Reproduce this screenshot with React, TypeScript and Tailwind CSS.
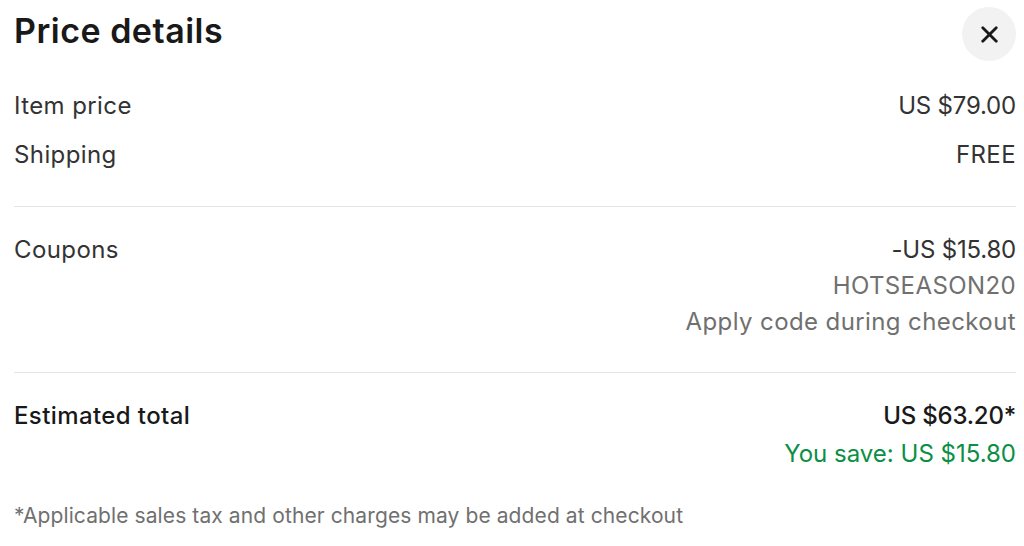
import { X } from "lucide-react";

function Row({ label, children, bold }: { label: string; children: React.ReactNode; bold?: boolean }) {
  return (
    <div className="flex items-start justify-between">
      <span className={bold ? "font-medium text-[#191919]" : "text-[#333333]"}>{label}</span>
      <div className="flex flex-col items-end">{children}</div>
    </div>
  );
}

export default function App() {
  return (
    <div className="w-[1024px] h-[546px] bg-white pl-[14px] pr-[8px] text-[24px] leading-[36px] tracking-[0.4px] font-['Inter',sans-serif] text-[#333333]">
      <div className="flex items-center justify-between pt-[7px]">
        <h2 className="text-[34px] leading-[48px] font-semibold text-[#191919] tracking-[0.5px] -mt-[6px]">Price details</h2>
        <button className="w-[54px] h-[54px] rounded-full bg-[#f2f2f2] flex items-center justify-center">
          <X className="w-[27px] h-[27px] text-[#191919]" strokeWidth={2.5} />
        </button>
      </div>

      <div className="mt-[27px] flex flex-col gap-[13px] pb-[33px] border-b border-[#e5e5e5]">
        <Row label="Item price">
          <span className="tracking-[-0.2px]">US $79.00</span>
        </Row>
        <Row label="Shipping">
          <span>FREE</span>
        </Row>
      </div>

      <div className="pt-[25px] pb-[32px] border-b border-[#e5e5e5]">
        <Row label="Coupons">
          <span className="tracking-[-0.2px]">-US $15.80</span>
          <span className="text-[#707070]">HOTSEASON20</span>
          <span className="text-[#707070]">Apply code during checkout</span>
        </Row>
      </div>

      <div className="pt-[25px]">
        <Row label="Estimated total" bold>
          <span className="font-medium text-[#191919] tracking-[-0.2px]">US $63.20*</span>
          <span className="text-[#0a8f45] mt-[2px] tracking-normal">You save: US $15.80</span>
        </Row>
      </div>

      <p className="mt-[26px] text-[21px] tracking-[0.1px] text-[#707070]">*Applicable sales tax and other charges may be added at checkout</p>
    </div>
  );
}
